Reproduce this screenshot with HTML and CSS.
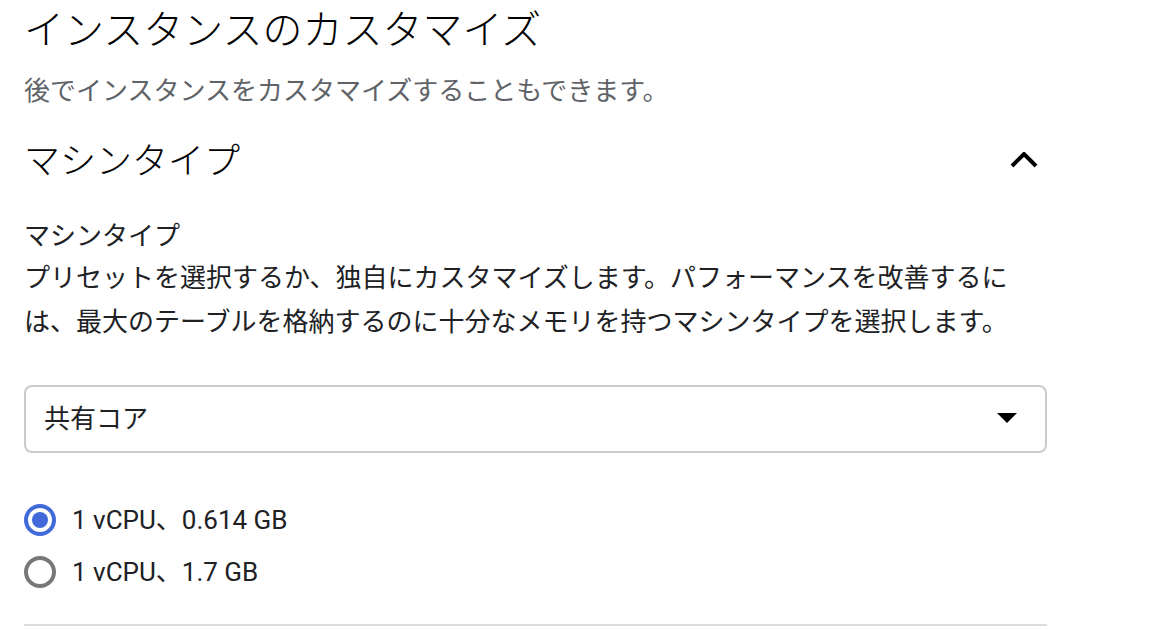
FILE: index.html
```html
<!DOCTYPE html>
<html lang="ja">
<head>
<meta charset="utf-8">
<title>インスタンスのカスタマイズ</title>
<link rel="stylesheet" href="styles.css">
</head>
<body>
<div class="page">
  <h1 class="title">インスタンスのカスタマイズ</h1>
  <p class="subtitle">後でインスタンスをカスタマイズすることもできます。</p>
  <div class="section-head">
    <h2 class="section-title">マシンタイプ</h2>
    <svg class="chevron" width="28" height="16" viewBox="0 0 28 16">
      <polyline points="2,14 14,2 26,14" fill="none" stroke="#000" stroke-width="4"/>
    </svg>
  </div>
  <div class="label">マシンタイプ</div>
  <p class="desc">プリセットを選択するか、独自にカスタマイズします。パフォーマンスを改善するには、最大のテーブルを格納するのに十分なメモリを持つマシンタイプを選択します。</p>
  <div class="select">
    <span class="select-value">共有コア</span>
    <span class="caret"></span>
  </div>
  <div class="radios">
    <div class="radio-row">
      <span class="radio checked"></span>
      <span class="radio-label">1 vCPU、0.614 GB</span>
    </div>
    <div class="radio-row">
      <span class="radio"></span>
      <span class="radio-label">1 vCPU、1.7 GB</span>
    </div>
  </div>
  <div class="divider"></div>
</div>
</body>
</html>
```

FILE: styles.css
```css
html, body {
  margin: 0;
  padding: 0;
  background: #fff;
}
body {
  font-family: Roboto, "Noto Sans CJK JP", sans-serif;
  color: #202124;
}
.page {
  width: 1023px;
  padding-left: 24px;
}
.title {
  margin: 0;
  font-family: "Noto Sans CJK JP", sans-serif;
  font-weight: 300;
  font-size: 40px;
  line-height: 54px;
  color: #000;
}
.subtitle {
  margin: 15px 0 0;
  font-family: "Noto Sans CJK JP", sans-serif;
  font-size: 26px;
  line-height: 40px;
  color: #5f6368;
}
.section-head {
  margin-top: 24px;
  display: flex;
  align-items: center;
  justify-content: space-between;
  height: 50px;
}
.section-title {
  margin: 0;
  font-family: "Noto Sans CJK JP", sans-serif;
  font-weight: 300;
  font-size: 36px;
  line-height: 50px;
  color: #000;
}
.chevron {
  margin-right: 9px;
  margin-top: 4px;
}
.label {
  margin-top: 31px;
  font-family: "Noto Sans CJK JP", sans-serif;
  font-size: 26px;
  line-height: 40px;
  color: #202124;
}
.desc {
  margin: 0;
  width: 1000px;
  font-family: "Noto Sans CJK JP", sans-serif;
  font-size: 26px;
  line-height: 44px;
  color: #202124;
}
.select {
  margin-top: 43px;
  box-sizing: border-box;
  height: 68px;
  border: 2px solid #cbcbcb;
  border-radius: 8px;
  display: flex;
  align-items: center;
  justify-content: space-between;
  padding: 0 28px 0 18px;
}
.select-value {
  font-family: "Noto Sans CJK JP", sans-serif;
  font-size: 26px;
  line-height: 40px;
  color: #202124;
  margin-top: -4px;
}
.caret {
  width: 0;
  height: 0;
  border-left: 10px solid transparent;
  border-right: 10px solid transparent;
  border-top: 10px solid #000;
  margin-top: -2px;
}
.radios {
  margin-top: 41px;
  display: flex;
  flex-direction: column;
}
.radio-row {
  height: 52px;
  display: flex;
  align-items: center;
  gap: 16px;
}
.radio {
  box-sizing: border-box;
  width: 32px;
  height: 32px;
  border: 4px solid #787878;
  border-radius: 50%;
  display: flex;
  align-items: center;
  justify-content: center;
}
.radio.checked {
  border-color: #3f6ad8;
}
.radio.checked::after {
  content: "";
  width: 16px;
  height: 16px;
  border-radius: 50%;
  background: #3f6ad8;
}
.radio-label {
  font-family: Roboto, "Noto Sans CJK JP", sans-serif;
  font-size: 26px;
  line-height: 36px;
  color: #202124;
}
.divider {
  margin-top: 26px;
  height: 2px;
  background: #dddddd;
}
```
